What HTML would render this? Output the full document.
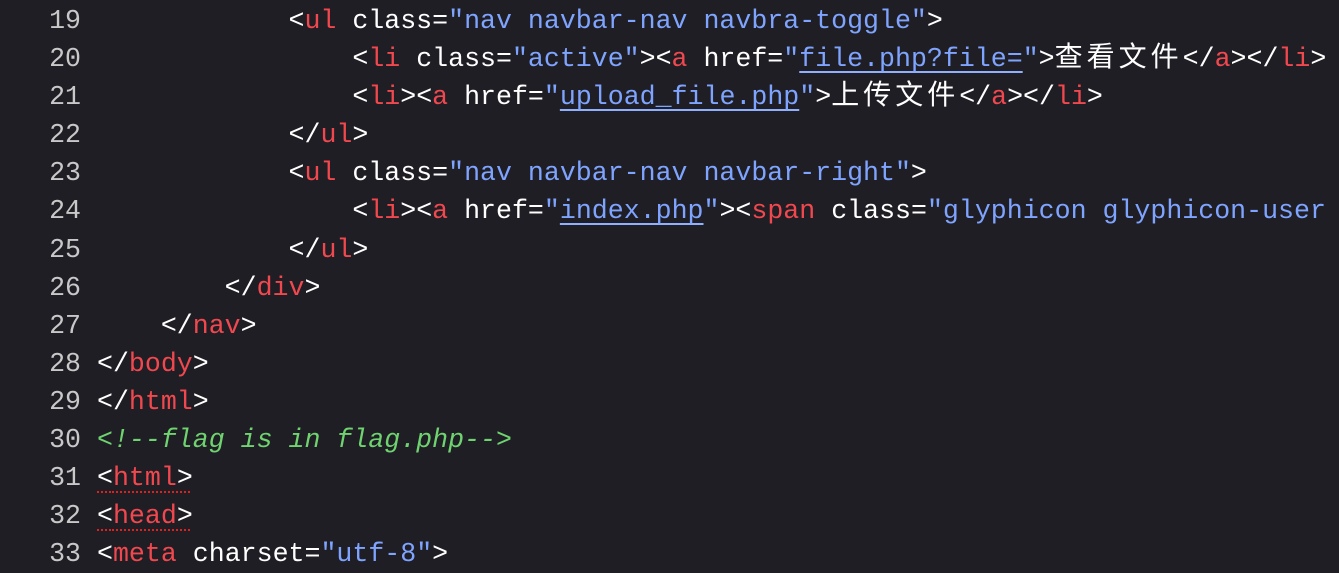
<!DOCTYPE html>
<html><head><meta charset="utf-8"><style>
html,body{margin:0;padding:0;background:#1e1e24;width:1339px;height:545px;overflow:hidden}
.c{position:absolute;left:0;top:2px;font-family:"Liberation Mono","Noto Sans CJK SC",monospace;font-size:26.6px;line-height:38.1px;color:#fff}
.l{height:38.1px;position:relative;white-space:pre}
.n{display:inline-block;width:81px;text-align:right;color:#c8c8c8;margin-right:16px}
.t{color:#f0484e}.s{color:#7fa4ff}.u{text-decoration:underline;text-decoration-color:#8fb0ff;text-underline-offset:5px}
.g{color:#6fd36f;font-style:italic}
.z{font-size:28px;letter-spacing:4px}
.d{text-decoration:underline dotted #e02020;text-underline-offset:6px;text-decoration-thickness:2px}
</style></head><body><div class="c"><div class="l"><span class="n">19</span>            &lt;<span class="t">ul</span> class=<span class="s">"nav navbar-nav navbra-toggle"</span>&gt;</div><div class="l"><span class="n">20</span>                &lt;<span class="t">li</span> class=<span class="s">"active"</span>&gt;&lt;<span class="t">a</span> href=<span class="s">"<span class="u">file.php?file=</span>"</span>&gt;<span class="z">查看文件</span>&lt;/<span class="t">a</span>&gt;&lt;/<span class="t">li</span>&gt;</div><div class="l"><span class="n">21</span>                &lt;<span class="t">li</span>&gt;&lt;<span class="t">a</span> href=<span class="s">"<span class="u">upload_file.php</span>"</span>&gt;<span class="z">上传文件</span>&lt;/<span class="t">a</span>&gt;&lt;/<span class="t">li</span>&gt;</div><div class="l"><span class="n">22</span>            &lt;/<span class="t">ul</span>&gt;</div><div class="l"><span class="n">23</span>            &lt;<span class="t">ul</span> class=<span class="s">"nav navbar-nav navbar-right"</span>&gt;</div><div class="l"><span class="n">24</span>                &lt;<span class="t">li</span>&gt;&lt;<span class="t">a</span> href=<span class="s">"<span class="u">index.php</span>"</span>&gt;&lt;<span class="t">span</span> class=<span class="s">"glyphicon glyphicon-user</span></div><div class="l"><span class="n">25</span>            &lt;/<span class="t">ul</span>&gt;</div><div class="l"><span class="n">26</span>        &lt;/<span class="t">div</span>&gt;</div><div class="l"><span class="n">27</span>    &lt;/<span class="t">nav</span>&gt;</div><div class="l"><span class="n">28</span>&lt;/<span class="t">body</span>&gt;</div><div class="l"><span class="n">29</span>&lt;/<span class="t">html</span>&gt;</div><div class="l"><span class="n">30</span><span class="g">&lt;!--flag is in flag.php--&gt;</span></div><div class="l"><span class="n">31</span><span class="d">&lt;<span class="t">html</span>&gt;</span></div><div class="l"><span class="n">32</span><span class="d">&lt;<span class="t">head</span>&gt;</span></div><div class="l"><span class="n">33</span>&lt;<span class="t">meta</span> charset=<span class="s">"utf-8"</span>&gt;</div></div></body></html>
